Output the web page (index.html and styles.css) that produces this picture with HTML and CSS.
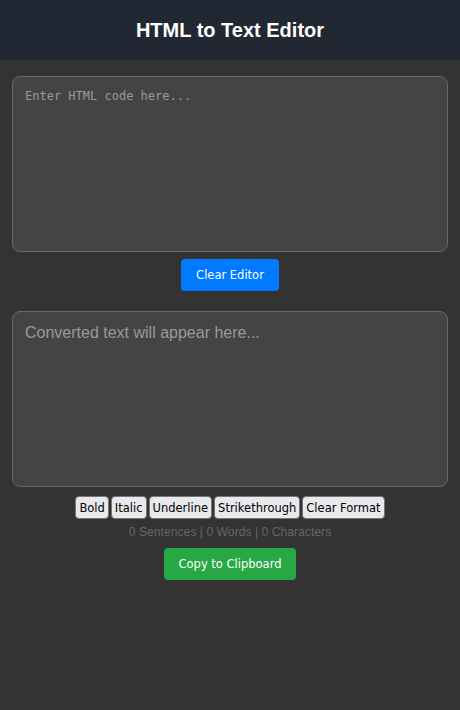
FILE: index.html
```html
<!DOCTYPE html>
<html lang="en">
<head>
    <meta charset="UTF-8">
    <meta name="viewport" content="width=device-width, initial-scale=1.0">
    <title>HTML to Text Editor</title>
    <link rel="stylesheet" href="styles.css">
</head>
<body>
    <header class="top-bar">
        <h1>HTML to Text Editor</h1>
    </header>
    <div class="container">
        <textarea id="htmlInput" class="html-input" placeholder="Enter HTML code here..."></textarea>
        <div class="actions">
            <button class="btn btn-blue">Clear Editor</button>
        </div>
        <textarea id="textOutput" class="text-output" placeholder="Converted text will appear here..."></textarea>
        <div class="format-bar">
            <button class="fmt">Bold</button>
            <button class="fmt">Italic</button>
            <button class="fmt">Underline</button>
            <button class="fmt">Strikethrough</button>
            <button class="fmt">Clear Format</button>
        </div>
        <p class="counts">0 Sentences | 0 Words | 0 Characters</p>
        <div class="actions">
            <button class="btn btn-green">Copy to Clipboard</button>
        </div>
    </div>
</body>
</html>
```

FILE: styles.css
```css
body { margin: 0; background: #333; font-family: "Liberation Sans", Arial, sans-serif; color: #eee; }
.top-bar { background: #212833; height: 60px; display: flex; align-items: center; justify-content: center; }
.top-bar h1 { margin: 0; font-size: 20px; font-weight: bold; color: #fff; }
.container { padding: 16px 12px; }
textarea { display: block; box-sizing: border-box; width: 100%; height: 176px; margin: 0; padding: 12px; background: #444; border: 1px solid #666; border-radius: 8px; color: #eee; resize: none; }
textarea::placeholder { color: #999; }
.html-input { font-family: "DejaVu Sans Mono", monospace; font-size: 12px; }
.text-output { font-family: "Liberation Sans", Arial, sans-serif; font-size: 16px; margin-top: 20px; }
.actions { display: flex; justify-content: center; margin-top: 7px; }
.btn { border: none; border-radius: 4px; height: 32px; padding: 0 15px; color: #fff; font-family: "DejaVu Sans", sans-serif; font-size: 11.5px; }
.btn-blue { background: #007bff; }
.btn-green { background: #28a745; }
.format-bar { display: flex; justify-content: center; gap: 2px; margin-top: 9px; }
.fmt { font-family: "DejaVu Sans", sans-serif; font-size: 11.5px; height: 23px; padding: 0 3px; background: #e9e9ed; color: #000; border: 1px solid #767676; border-radius: 4px; }
.counts { margin: 6px 0 0; text-align: center; font-size: 12.2px; color: #666; }
.counts + .actions { margin-top: 9px; }
```
